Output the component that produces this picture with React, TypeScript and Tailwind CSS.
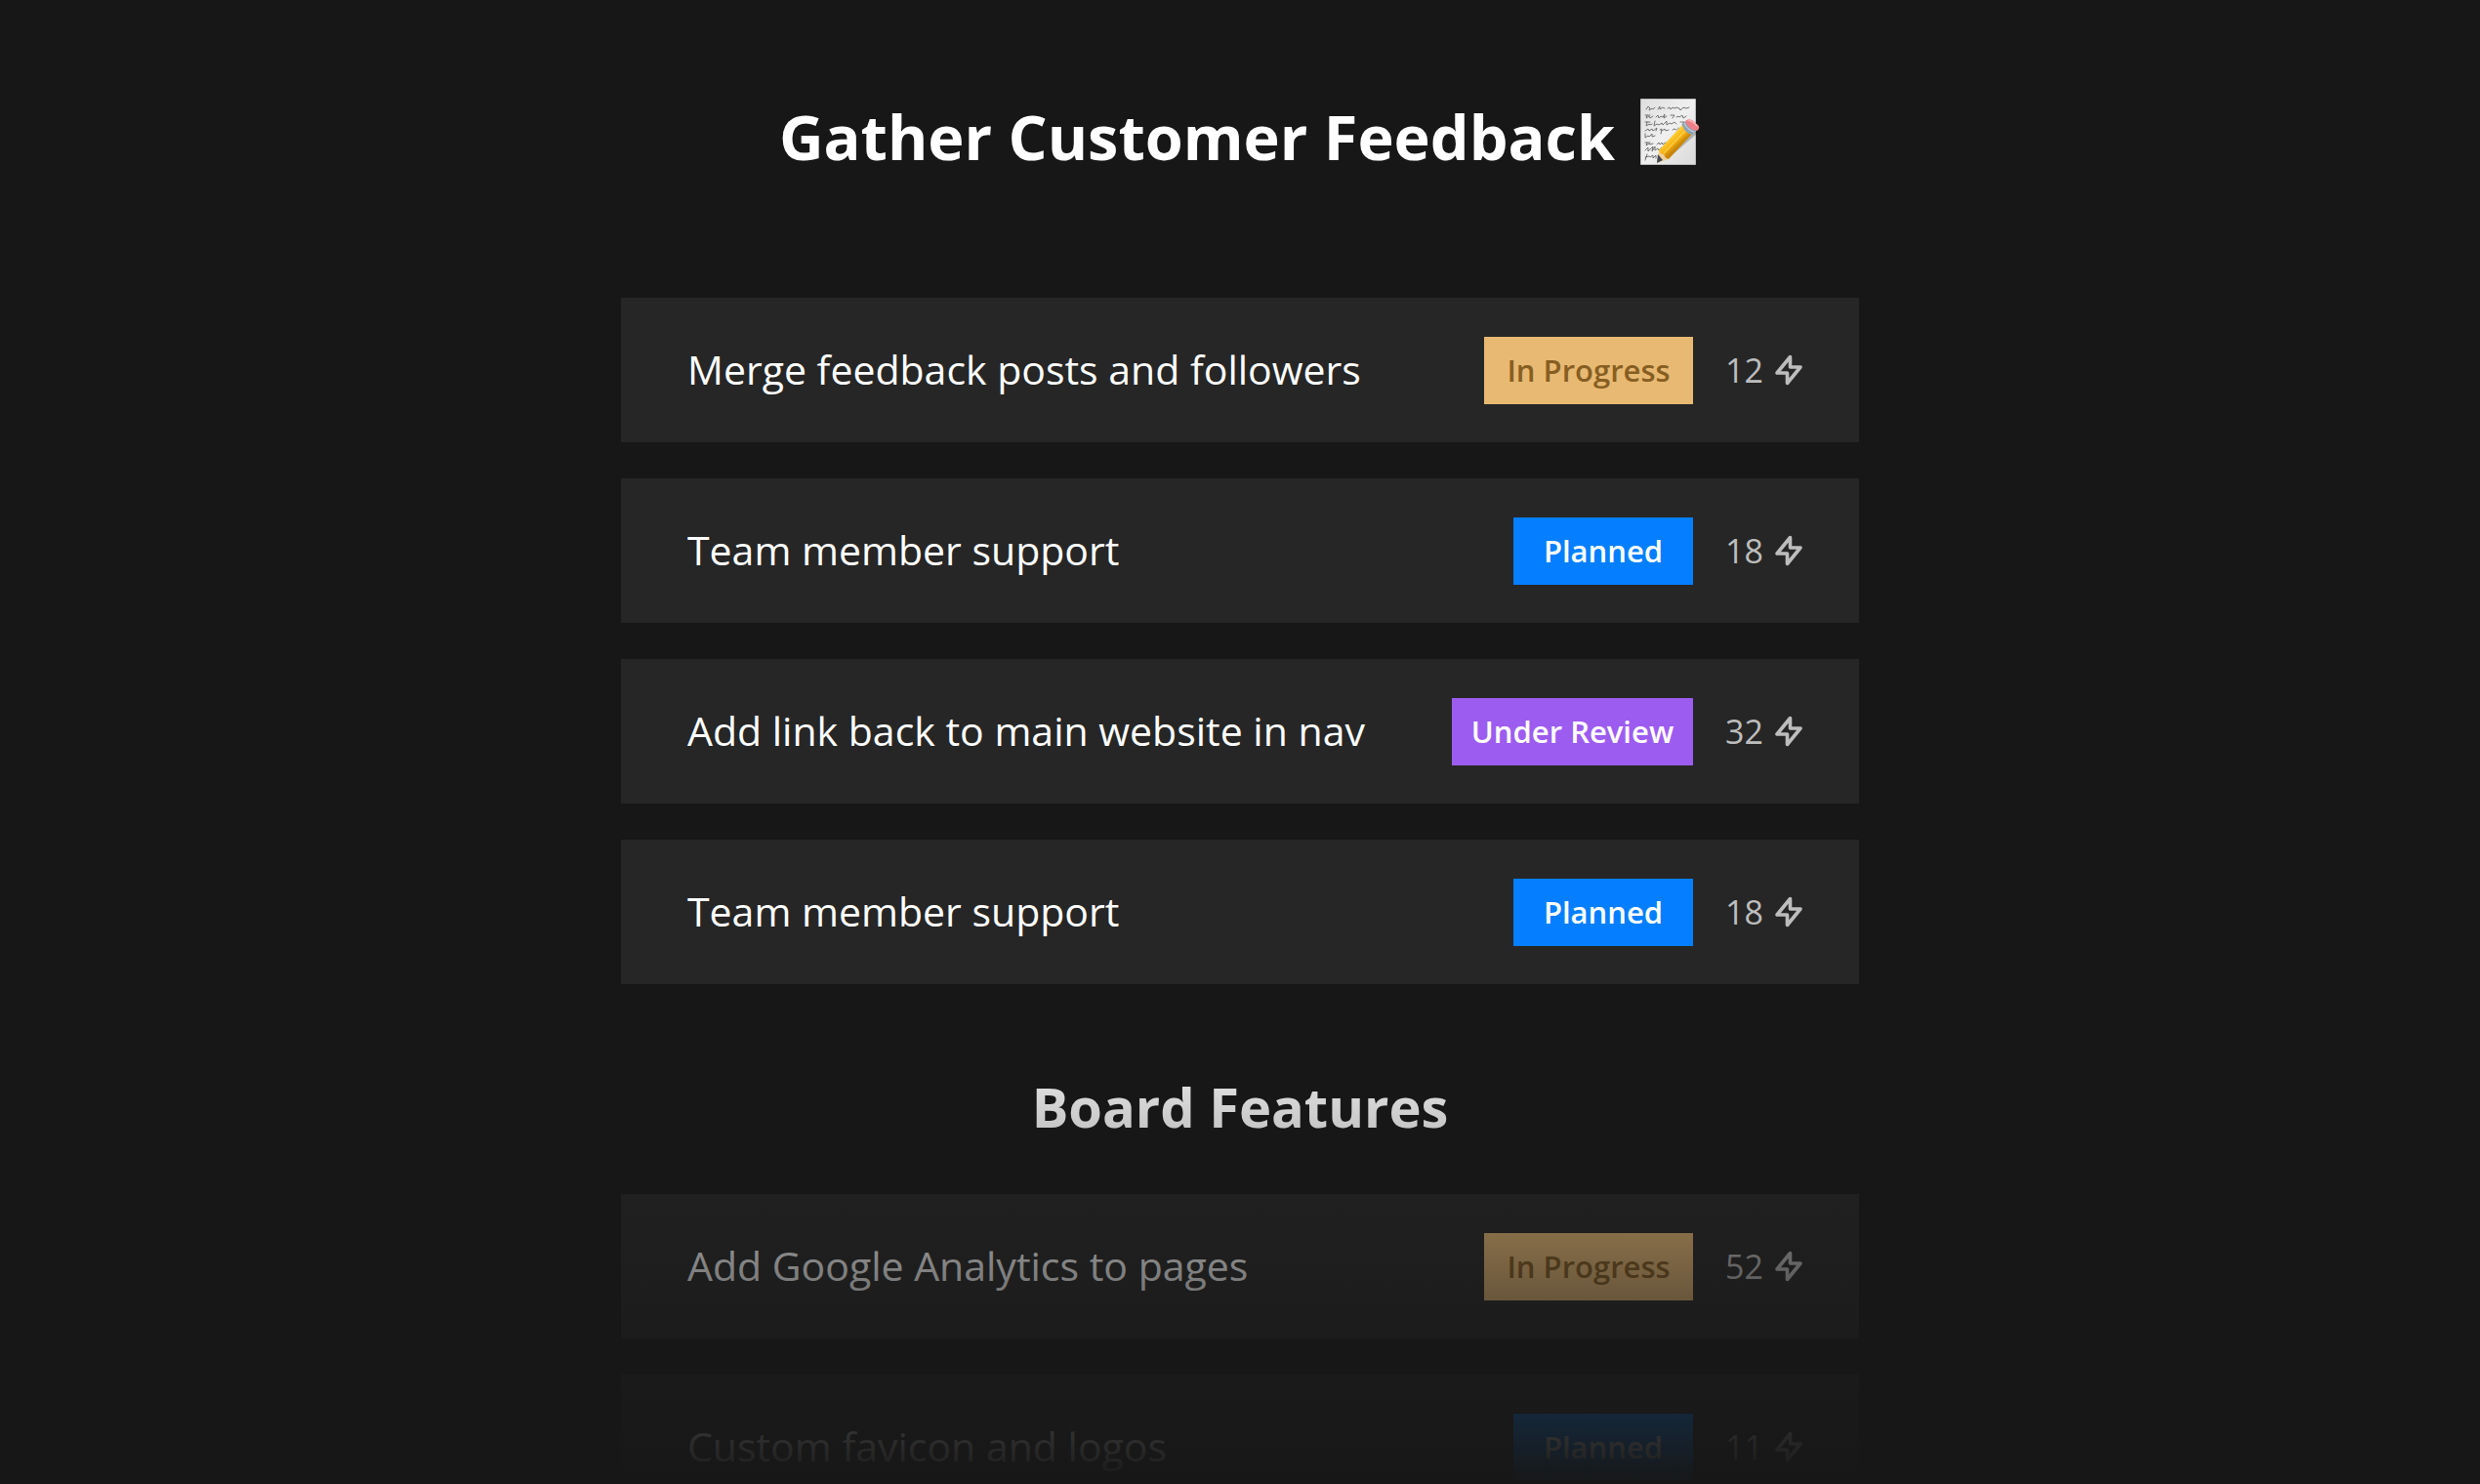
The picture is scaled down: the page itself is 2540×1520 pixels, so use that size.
type Status = "progress" | "planned" | "review"

type Post = {
  title: string
  status: Status
  votes: number
}

const badges: Record<Status, { label: string; className: string }> = {
  progress: { label: "In Progress", className: "min-w-[214px] bg-[#e8b973] text-[#875e22]" },
  planned: { label: "Planned", className: "min-w-[184px] bg-[#057fff] text-white" },
  review: { label: "Under Review", className: "min-w-[247px] bg-[#9d5cf0] text-white" },
}

const feedback: Post[] = [
  { title: "Merge feedback posts and followers", status: "progress", votes: 12 },
  { title: "Team member support", status: "planned", votes: 18 },
  { title: "Add link back to main website in nav", status: "review", votes: 32 },
  { title: "Team member support", status: "planned", votes: 18 },
]

const features: Post[] = [
  { title: "Add Google Analytics to pages", status: "progress", votes: 52 },
  { title: "Custom favicon and logos", status: "planned", votes: 11 },
]

function BoltIcon() {
  return (
    <svg
      className="size-9"
      viewBox="0 0 24 24"
      fill="none"
      stroke="currentColor"
      strokeWidth="2.4"
      strokeLinecap="round"
      strokeLinejoin="round"
      aria-hidden="true"
    >
      <path d="M13 10V3L4 14h7v7l9-11h-7z" />
    </svg>
  )
}

function MemoIcon() {
  return (
    <svg className="h-[70px] w-[64px]" viewBox="0 0 64 70" fill="none" aria-hidden="true">
      <defs>
        <linearGradient id="paper" x1="0" y1="0" x2="1" y2="1">
          <stop offset="0" stopColor="#dedede" />
          <stop offset="0.5" stopColor="#f0f0f0" />
          <stop offset="1" stopColor="#d9d9d9" />
        </linearGradient>
        <linearGradient id="wood" x1="27" y1="40" x2="38" y2="52" gradientUnits="userSpaceOnUse">
          <stop offset="0" stopColor="#ffdf55" />
          <stop offset="0.35" stopColor="#fdc82c" />
          <stop offset="0.7" stopColor="#f4b012" />
          <stop offset="1" stopColor="#c98708" />
        </linearGradient>
      </defs>
      <path d="M2.5 1.5h56v67h-56z" fill="url(#paper)" stroke="#bcbcbc" />
      {/* handwriting */}
      <g stroke="#666" strokeWidth="0.9" strokeLinecap="round" strokeLinejoin="round">
        <path d="M8 12l2-3 2 2-1 2 3-2 1 1 2-2M20 12l2-3v3l3-2 2 1M30 11l2-1 1 2 2-2 2 1 2-1 3 1 1 2 3-3 3 1 3-1" />
        <path d="M7 18h5M9 18l-1 3 3-2 1 2 3-2M18 20l2-2 1 3 2-2 2 1 2-3-1 4 3-2M33 18h4l-2 3M39 20l2-1 1 1 3-2 1 3 3-2" />
        <path d="M7 25h5M9 25l-1 4 3-2 1 1 2-1M17 24l-1 5 3-2 2 1 3-2 1 2 4-4v4l3-2 2 1 3-2 2 2M43 25h4l-2 3 4-2" />
        <path d="M7 34l3-2 1 2 3-2 1 2 4-3-1 3M22 33l2-1-1 5M24 34l3-2 1 2 3-1M35 33l2-1 2 1M41 31v3l4-3" />
        <path d="M7 37v4l3-2 1 1 3-3v3l3-1" />
        <path d="M7 46h5M9 46l-1 3 3-2 1 1 3-1M19 48l2-2 1 2 2-2 1 2 3-2" />
        <path d="M7 54l3-3v4l2-2 3-3-1 5 3-5v4l3-2 1 2 3-3" />
        <path d="M9 58l-2 6M7 61l4-1 1 1 3-2v3l3-3v3" />
      </g>
      <path d="M24 65l31-32 6 3-30 26z" fill="#000" opacity="0.22" />
      <path d="M21 54l10 9-12 4z" fill="#efd09b" />
      <path d="M20 58l5 6-6 3z" fill="#414653" />
      <path d="M21 54L45 28l10 9-24 26q-4-1-5-5-4 0-5-4z" fill="url(#wood)" />
      <path d="M26 57l23-24" stroke="#ffe46f" strokeWidth="1.3" opacity="0.55" />
      <path d="M45 28l3-4 11 9-4 5q-8-2-10-10z" fill="#8da3b8" />
      <path d="M47 26q3 7 10 9" stroke="#d2dce5" />
      <path d="M48 24q3-3 7-1l6 5q3 3-1 6-9-1-12-10z" fill="#ed7f87" />
      <path d="M51 23q5 1 9 6" stroke="#ffb1b2" strokeWidth="1.4" strokeLinecap="round" />
    </svg>
  )
}

function PostRow({ post }: { post: Post }) {
  const badge = badges[post.status]

  return (
    <li className="flex h-[148px] items-center bg-[#262626] pr-[54px] pl-[68px]">
      <h3 className="flex-1 text-[41px] text-white">{post.title}</h3>
      <span
        className={`flex h-[69px] items-center justify-center text-[31px] font-semibold ${badge.className}`}
      >
        {badge.label}
      </span>
      <div className="flex w-[116px] items-center justify-end gap-2 text-[34px] text-[#bdbdbd]">
        <span>{post.votes}</span>
        <BoltIcon />
      </div>
    </li>
  )
}

function PostList({ posts }: { posts: Post[] }) {
  return (
    <ul className="flex flex-col gap-[37px]">
      {posts.map((post, i) => (
        <PostRow key={i} post={post} />
      ))}
    </ul>
  )
}

export default function App() {
  return (
    <div className="relative h-screen overflow-hidden bg-[#171717] font-['Open_Sans',sans-serif]">
      <main className="mx-auto max-w-[1268px]">
        <header className="flex h-[305px] items-start justify-center gap-6 pt-[100px]">
          <h1 className="text-[63px] leading-[80px] font-bold text-white">Gather Customer Feedback</h1>
          <MemoIcon />
        </header>

        <PostList posts={feedback} />

        <h2 className="pt-[85px] pb-[50px] text-center text-[56px] leading-[80px] font-bold text-white">
          Board Features
        </h2>

        <PostList posts={features} />
      </main>

      {/* fade out towards the bottom */}
      <div className="pointer-events-none absolute inset-x-0 bottom-0 h-[480px] bg-linear-to-b from-[#171717]/0 to-[#171717]" />
    </div>
  )
}
